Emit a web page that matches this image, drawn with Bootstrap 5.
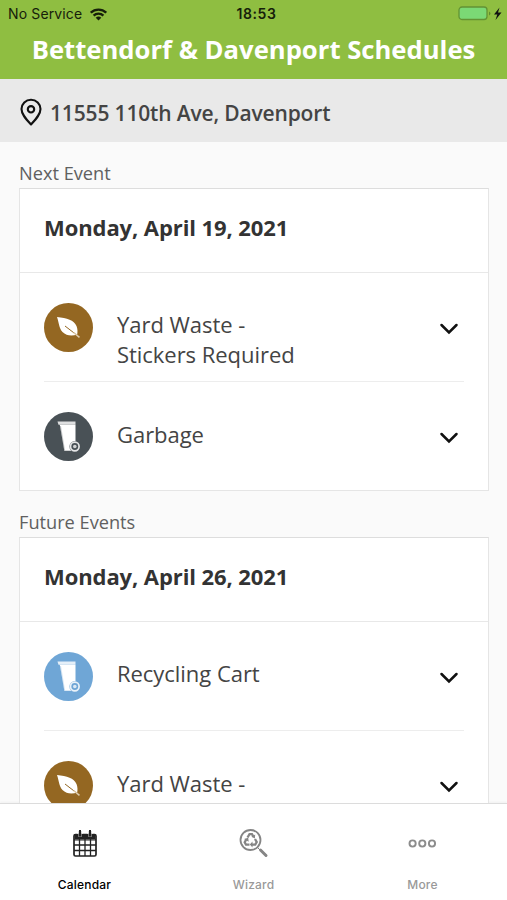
<!DOCTYPE html>
<html lang="en">
<head>
<meta charset="utf-8">
<meta name="viewport" content="width=device-width, initial-scale=1">
<title>Bettendorf &amp; Davenport Schedules</title>
<link href="https://cdn.jsdelivr.net/npm/bootstrap@5.3.0/dist/css/bootstrap.min.css" rel="stylesheet">
<style>
body{font-family:"Open Sans","Noto Sans",sans-serif;background:#fafafa;color:#444}
.app{height:900px}
.app-head{height:79px;background:#8fbe41}
.status{height:28px;font:14px/28px Inter,"Liberation Sans",sans-serif;color:#16200a;padding:0 4px 0 8px}
.status .carrier{letter-spacing:.13px}
.status .clock{font-weight:600;letter-spacing:.6px;padding-left:2px}
.app-title{font-size:25.65px;line-height:44px;font-weight:700;color:#fff}
.address{height:63px;background:#e9e9e9;padding:6px 0 0 20px;font-size:21px;font-weight:600;letter-spacing:-.16px}
.feed{padding:19px 18px 0 19px}
.section-label{font-size:18.2px;line-height:24px;margin-bottom:3px;color:#606060}
.event-card+.section-label{margin-top:19px}
.event-card{--bs-card-border-color:#e5e5e5;--bs-card-border-radius:0;--bs-card-inner-border-radius:0;border-top-color:#ddd}
.event-date{height:84px;padding:0 24px;border-bottom:1px solid #e8e8e8;font-size:22px;line-height:77px;font-weight:700;letter-spacing:-.09px;color:#333}
.event-row{height:108px;margin:0 24px;padding-top:30px;font-size:22px;line-height:30px;letter-spacing:-.04px}
.event-row+.event-row{height:109px;border-top:1px solid #ededed}
.event-name{padding:6px 0 0 24px}
.event-row+.event-row .event-name{padding-top:7px}
.chev{margin:19px 5px 0 0}
.tabs{height:97px;border-top:1px solid #dcdcdc;background:#fff;font:500 12px/16px Inter,"Liberation Sans",sans-serif;color:#999;box-shadow:0 -1px 2px #0000000a}
.tab-label{margin-top:19px;letter-spacing:.2px}
</style>
</head>
<body>
<svg class="d-none" aria-hidden="true">
  <symbol id="leaf" viewBox="0 0 49 49"><circle cx="24.5" cy="24.5" r="24.5" fill="#946722"/><path fill="#fff" d="M13 14C23 15 30 17 32.5 23c1.200 3 1.200 6 .7 8.500-5 1.800-10.800 1.500-14.700-2.500C15 25.300 14.900 19 13 14Z"/><path d="m21 23 13 10" fill="none" stroke="#946722" stroke-width="1"/><path d="m29.500 29.500 6 4.800" fill="none" stroke="#dfcdaf" stroke-width="1.500"/></symbol>
  <symbol id="bin" viewBox="0 0 49 49"><circle cx="24.500" cy="24.500" r="24.500" fill="currentColor"/><path fill="#fff" opacity=".82" d="M13.500 9.500H31.500v3.300H14.500Z"/><path fill="#fff" d="M15.800 12.800H31.500V33L27 38.800H20.300Z"/><path d="M16.500 14 20.500 38" stroke="currentColor" stroke-width=".6" opacity=".5"/><circle cx="30.800" cy="34.500" r="5.400" fill="currentColor"/><circle cx="30.800" cy="34.500" r="4.300" fill="none" stroke="#fff" stroke-width="1.700" opacity=".85"/><circle cx="30.800" cy="34.500" r="1.800" fill="#fff" opacity=".75"/></symbol>
  <symbol id="chevron" viewBox="0 0 20 14"><path d="m2.500 3 7.500 7.500L17.500 3" fill="none" stroke="#111" stroke-width="2.500" stroke-linecap="round"/></symbol>
</svg>
<div class="app d-flex flex-column overflow-hidden">
  <header class="app-head flex-shrink-0">
    <div class="status row g-0">
      <div class="col d-flex align-items-center"><span class="carrier">No Service</span>
        <svg class="ms-2" width="17" height="13" viewBox="0 0 17 13"><path d="M.8 4.700a11 11 0 0 1 15.400 0M3.600 7.600a7 7 0 0 1 9.800 0" fill="none" stroke="#16200a" stroke-width="2.300"/><path d="M5.700 9.800a4 4 0 0 1 5.600 0L8.500 12.600Z" fill="#16200a"/></svg></div>
      <div class="col-auto clock">18:53</div>
      <div class="col d-flex align-items-center justify-content-end">
        <svg width="45" height="16" viewBox="0 0 45 16"><rect x="1" y="1" width="28" height="12.500" rx="3" fill="#7bd975" stroke="#639334" stroke-width="1.300"/><path d="M31 5.500v4c2-1 2-3 0-4" fill="#5d8a2e"/><path d="M41.500 1.500 36 8.500h3.300L37.500 14 43.500 6.500h-3.500Z" fill="#111"/></svg></div>
    </div>
    <h1 class="app-title text-center m-0 text-nowrap">Bettendorf &amp; Davenport Schedules</h1>
  </header>
  <div class="address d-flex align-items-center flex-shrink-0">
    <svg class="flex-shrink-0 mb-1" width="22" height="28" viewBox="0 0 22 28"><path d="M11 26.500C6 21 1.500 16.300 1.500 11a9.500 9.300 0 0 1 19 0C20.500 16.300 16 21 11 26.500Z" fill="none" stroke="#111" stroke-width="2.100" stroke-linejoin="round"/><circle cx="11" cy="11.300" r="3.200" fill="none" stroke="#111" stroke-width="2.100"/></svg>
    <span class="ms-2">11555 110th Ave, Davenport</span>
  </div>
  <main class="feed flex-grow-1 overflow-hidden">
    <div class="section-label">Next Event</div>
    <section class="card event-card">
      <div class="event-date">Monday, April 19, 2021</div>
      <div class="event-row d-flex align-items-start">
        <svg class="flex-shrink-0" width="49" height="49"><use href="#leaf"/></svg>
        <div class="event-name flex-grow-1">Yard Waste -<br>Stickers Required</div>
        <svg class="chev" width="20" height="14"><use href="#chevron"/></svg>
      </div>
      <div class="event-row d-flex align-items-start">
        <svg class="flex-shrink-0" width="49" height="49" color="#495156"><use href="#bin"/></svg>
        <div class="event-name flex-grow-1">Garbage</div>
        <svg class="chev" width="20" height="14"><use href="#chevron"/></svg>
      </div>
    </section>
    <div class="section-label">Future Events</div>
    <section class="card event-card">
      <div class="event-date">Monday, April 26, 2021</div>
      <div class="event-row d-flex align-items-start">
        <svg class="flex-shrink-0" width="49" height="49" color="#6fa6d6"><use href="#bin"/></svg>
        <div class="event-name flex-grow-1">Recycling Cart</div>
        <svg class="chev" width="20" height="14"><use href="#chevron"/></svg>
      </div>
      <div class="event-row d-flex align-items-start">
        <svg class="flex-shrink-0" width="49" height="49"><use href="#leaf"/></svg>
        <div class="event-name flex-grow-1">Yard Waste -</div>
        <svg class="chev" width="20" height="14"><use href="#chevron"/></svg>
      </div>
    </section>
  </main>
  <nav class="tabs row g-0 flex-shrink-0 text-center pt-4">
    <div class="col text-black">
      <svg class="d-block mx-auto" width="30" height="30" viewBox="0 -2 30 30"><path d="M4.500 4.500h21V9h-21Z" fill="#222"/><rect x="4" y="4.500" width="22" height="21.500" rx="1.500" fill="none" stroke="#222" stroke-width="1.700"/><path d="M4 9.800h22M4 15h22M4 20.500h22M9.500 9v17M15 9v17M20.500 9v17" stroke="#222" stroke-width="1.300"/><path d="M10 1v6M20 1v6" stroke="#999" stroke-width="3.400"/><path d="M10 0v6.500M20 0v6.500" stroke="#222" stroke-width="2"/><path d="M7 0h1.500v3.500H7ZM11.500 0H13v3.500h-1.500ZM17 0h1.500v3.500H17ZM21.500 0H23v3.500h-1.500Z" fill="#fff"/></svg>
      <div class="tab-label">Calendar</div>
    </div>
    <div class="col">
      <svg class="d-block mx-auto" width="30" height="30" viewBox="0 -1 30 30"><circle cx="11.500" cy="11" r="10" fill="none" stroke="#858585" stroke-width="1.800"/><path d="m18.500 18.500 3 3" stroke="#858585" stroke-width="1"/><path d="m21.500 21 5.500 5.500" stroke="#858585" stroke-width="3" stroke-linecap="round"/><g transform="translate(0 -1)"><g fill="none" stroke="#858585" stroke-width="2.300"><path d="m8.500 9.500 2-3.300h2.500l1.500 2.600"/><path d="m16 11 1.700 3-1.500 2.700H13"/><path d="M10.500 16.700H7l-1.300-2.500 1.700-3"/></g><path d="m16.200 6.500-.3 4-3.500-1.800ZM13.500 13.500v6l-2.700-3ZM5 11l4.200-1.200.5 4Z" fill="#858585"/></g></svg>
      <div class="tab-label">Wizard</div>
    </div>
    <div class="col">
      <svg class="d-block mx-auto" width="30" height="30" viewBox="0 0 30 30"><g fill="none" stroke="#8c8c8c" stroke-width="1.900"><circle cx="4.600" cy="15.500" r="3.100"/><circle cx="14.300" cy="15.500" r="3.100"/><circle cx="24" cy="15.500" r="3.100"/></g></svg>
      <div class="tab-label">More</div>
    </div>
  </nav>
</div>
<script src="https://cdn.jsdelivr.net/npm/bootstrap@5.3.0/dist/js/bootstrap.bundle.min.js"></script>
</body>
</html>
